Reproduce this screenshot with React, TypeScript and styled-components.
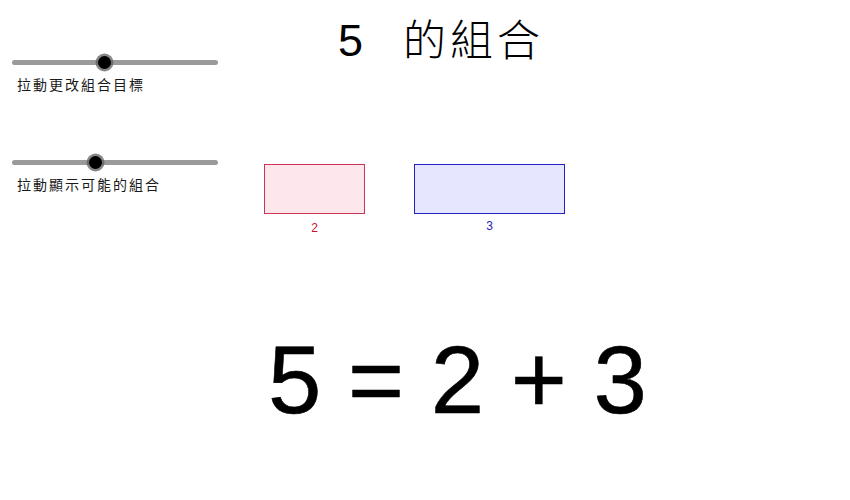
import React from "react";
import styled, { createGlobalStyle } from "styled-components";

const Global = createGlobalStyle`
  html, body { margin: 0; padding: 0; background: #fff; }
  body { font-family: "Liberation Sans", Arial, sans-serif; }
`;

const Stage = styled.div`
  width: 850px;
  height: 500px;
  display: flex;
  overflow: hidden;
  background: #fff;
`;

const LeftPanel = styled.div`
  width: 252px;
  padding-left: 12px;
  display: flex;
  flex-direction: column;
`;

const SliderBlock = styled.div<{ $top: number }>`
  margin-top: ${(p) => p.$top}px;
  display: flex;
  flex-direction: column;
`;

const SliderTrack = styled.div`
  position: relative;
  width: 206px;
  height: 20px;
  display: flex;
  align-items: center;
`;

const TrackBar = styled.div`
  width: 100%;
  height: 5px;
  border-radius: 3px;
  background: #9a9a9a;
`;

const Knob = styled.div`
  position: absolute;
  top: 50%;
  width: 13px;
  height: 13px;
  margin-left: -6.5px;
  margin-top: -6.5px;
  border-radius: 50%;
  background: #000;
  box-shadow: 0 0 0 2.5px rgba(95, 95, 95, 0.75);
`;

const SliderLabel = styled.div`
  margin-top: 3px;
  margin-left: 5px;
  font-family: "Noto Sans CJK TC", "Noto Sans CJK SC", sans-serif;
  font-size: 14px;
  line-height: 18px;
  letter-spacing: 2px;
  color: #1a1a1a;
`;

const Main = styled.div`
  flex: 1;
  display: flex;
  flex-direction: column;
`;

const Title = styled.div`
  margin-top: 9px;
  margin-left: 74px;
  display: flex;
  align-items: baseline;
  height: 56px;
  color: #000;
`;

const TitleNum = styled.span`
  font-family: "Liberation Sans", Arial, sans-serif;
  font-size: 45px;
  line-height: 56px;
`;

const TitleText = styled.span`
  margin-left: 40px;
  font-family: "Noto Sans CJK TC", "Noto Sans CJK SC", sans-serif;
  font-size: 43px;
  font-weight: 300;
  line-height: 56px;
  letter-spacing: 4px;
`;

const BarsRow = styled.div`
  margin-top: 99px;
  display: flex;
  gap: 49px;
`;

const BarItem = styled.div`
  display: flex;
  flex-direction: column;
  align-items: center;
`;

const Bar = styled.div<{ $border: string; $fill: string }>`
  height: 50px;
  box-sizing: border-box;
  border: 1.5px solid ${(p) => p.$border};
  background: ${(p) => p.$fill};
`;

const BarLabel = styled.div<{ $color: string; $offset: number }>`
  margin-top: ${(p) => p.$offset}px;
  font-family: "Liberation Sans", Arial, sans-serif;
  font-size: 12px;
  line-height: 12px;
  color: ${(p) => p.$color};
`;

const Equation = styled.div`
  margin-top: 96px;
  margin-left: 4px;
  font-family: "Liberation Sans", Arial, sans-serif;
  font-size: 96px;
  line-height: 100px;
  color: #000;
  white-space: pre;
  -webkit-text-stroke: 0.6px #000;
`;

const UNIT = 50;

type SliderProps = { value: number; min: number; max: number; label: string; top: number };

function Slider({ value, min, max, label, top }: SliderProps) {
  const pct = ((value - min) / (max - min)) * 100;
  return (
    <SliderBlock $top={top}>
      <SliderTrack>
        <TrackBar />
        <Knob style={{ left: `${pct}%` }} />
      </SliderTrack>
      <SliderLabel>{label}</SliderLabel>
    </SliderBlock>
  );
}

export default function App() {
  const total = 5;
  const a = 2;
  const b = total - a;
  return (
    <>
      <Global />
      <Stage>
        <LeftPanel>
          <Slider value={44.7} min={0} max={100} label="拉動更改組合目標" top={52} />
          <Slider value={40.3} min={0} max={100} label="拉動顯示可能的組合" top={59} />
        </LeftPanel>
        <Main>
          <Title>
            <TitleNum>{total}</TitleNum>
            <TitleText>的組合</TitleText>
          </Title>
          <BarsRow>
            <BarItem>
              <Bar $border="#cc3355" $fill="#fde6ec" style={{ width: a * UNIT + 1 }} />
              <BarLabel $color="#cc1133" $offset={8}>{a}</BarLabel>
            </BarItem>
            <BarItem>
              <Bar $border="#2222c4" $fill="#e6e6ff" style={{ width: b * UNIT + 1 }} />
              <BarLabel $color="#2222bb" $offset={6}>{b}</BarLabel>
            </BarItem>
          </BarsRow>
          <Equation>{`${total} = ${a} + ${b}`}</Equation>
        </Main>
      </Stage>
    </>
  );
}
